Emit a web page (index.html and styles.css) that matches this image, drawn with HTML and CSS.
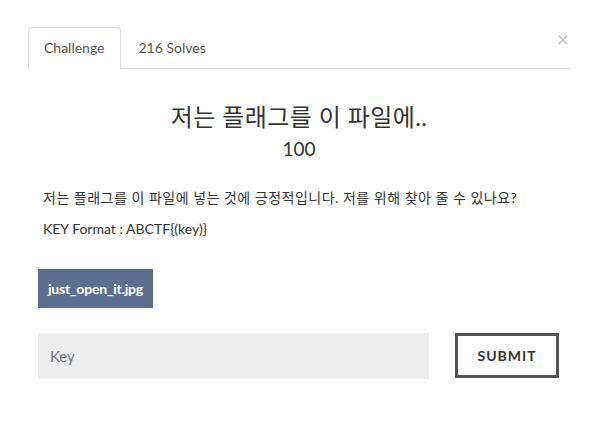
FILE: index.html
```html
<!DOCTYPE html>
<html lang="ko">
<head>
    <meta charset="UTF-8">
    <meta name="viewport" content="width=device-width, initial-scale=1.0">
    <title>Challenge</title>
    <link rel="stylesheet" href="styles.css">
</head>
<body>
    <div class="modal">
        <button class="close" type="button">&times;</button>

        <!-- Tabs -->
        <div class="nav-tabs">
            <a href="#" class="tab active">Challenge</a>
            <a href="#" class="tab">216 Solves</a>
        </div>

        <!-- Challenge body -->
        <div class="challenge">
            <h3 class="challenge-name">저는 플래그를 이 파일에..</h3>
            <h4 class="challenge-value">100</h4>

            <div class="challenge-desc">
                <p class="ko">저는 플래그를 이 파일에 넣는 것에 긍정적입니다. 저를 위해 찾아 줄 수 있나요?</p>
                <p>KEY Format : ABCTF{(key)}</p>
            </div>

            <div class="files">
                <a href="#" class="file-button">just_open_it.jpg</a>
            </div>

            <form class="submit-row">
                <input class="key-input" type="text" placeholder="Key">
                <button class="submit-button" type="button">Submit</button>
            </form>
        </div>
    </div>
</body>
</html>
```

FILE: styles.css
```css
* {
    margin: 0;
    padding: 0;
    box-sizing: border-box;
}

body {
    font-family: 'Lato', 'Noto Sans CJK KR', sans-serif;
    background-color: #fff;
    color: #333;
}

.modal {
    position: relative;
    padding: 27px 26px 0 28px;
}

/* Close button */
.close {
    position: absolute;
    top: 28px;
    right: 27px;
    border: none;
    background: none;
    font-family: 'Lato', sans-serif;
    font-size: 21px;
    line-height: 21px;
    color: #c4c4c4;
    cursor: pointer;
}

/* Tabs */
.nav-tabs {
    display: flex;
    border-bottom: 1px solid #ddd;
}

.tab {
    display: block;
    padding: 10px 15px;
    margin-bottom: -1px;
    margin-right: 2px;
    font-size: 14px;
    line-height: 20px;
    color: #555;
    text-decoration: none;
    border: 1px solid transparent;
    border-radius: 4px 4px 0 0;
}

.tab.active {
    border-color: #ddd #ddd #fff;
}

/* Challenge */
.challenge {
    padding: 0 10px;
}

.challenge-name {
    margin-top: 33px;
    font-size: 24px;
    font-weight: 400;
    line-height: 30px;
    letter-spacing: 0.4px;
    text-align: center;
}

.challenge-value {
    margin-top: 5px;
    font-size: 19px;
    font-weight: 400;
    line-height: 24px;
    text-align: center;
}

.challenge-desc {
    padding: 0 5px;
    margin-top: 26px;
}

.challenge-desc p {
    font-size: 14px;
    line-height: 21px;
    margin-bottom: 10px;
}

.challenge-desc .ko {
    letter-spacing: 0.5px;
}

.files {
    margin-top: 30px;
    display: flex;
}

.file-button {
    display: block;
    padding: 10px 10px;
    background-color: #5b7090;
    color: #fff;
    font-size: 14px;
    font-weight: 700;
    line-height: 19px;
    letter-spacing: -0.2px;
    text-decoration: none;
}

.submit-row {
    display: flex;
    align-items: flex-start;
    margin-top: 25px;
}

.key-input {
    width: 391px;
    height: 46px;
    padding: 0 12px;
    border: none;
    background-color: #eee;
    font-family: 'Lato', sans-serif;
    font-size: 15px;
    color: #333;
    outline: none;
}

.key-input::placeholder {
    color: #777;
}

.submit-button {
    margin-left: 26px;
    width: 104px;
    height: 45px;
    border: 3px solid #555;
    background: #fff;
    font-family: 'Lato', sans-serif;
    font-size: 14px;
    font-weight: 700;
    letter-spacing: 1px;
    text-transform: uppercase;
    color: #333;
    cursor: pointer;
}
```
